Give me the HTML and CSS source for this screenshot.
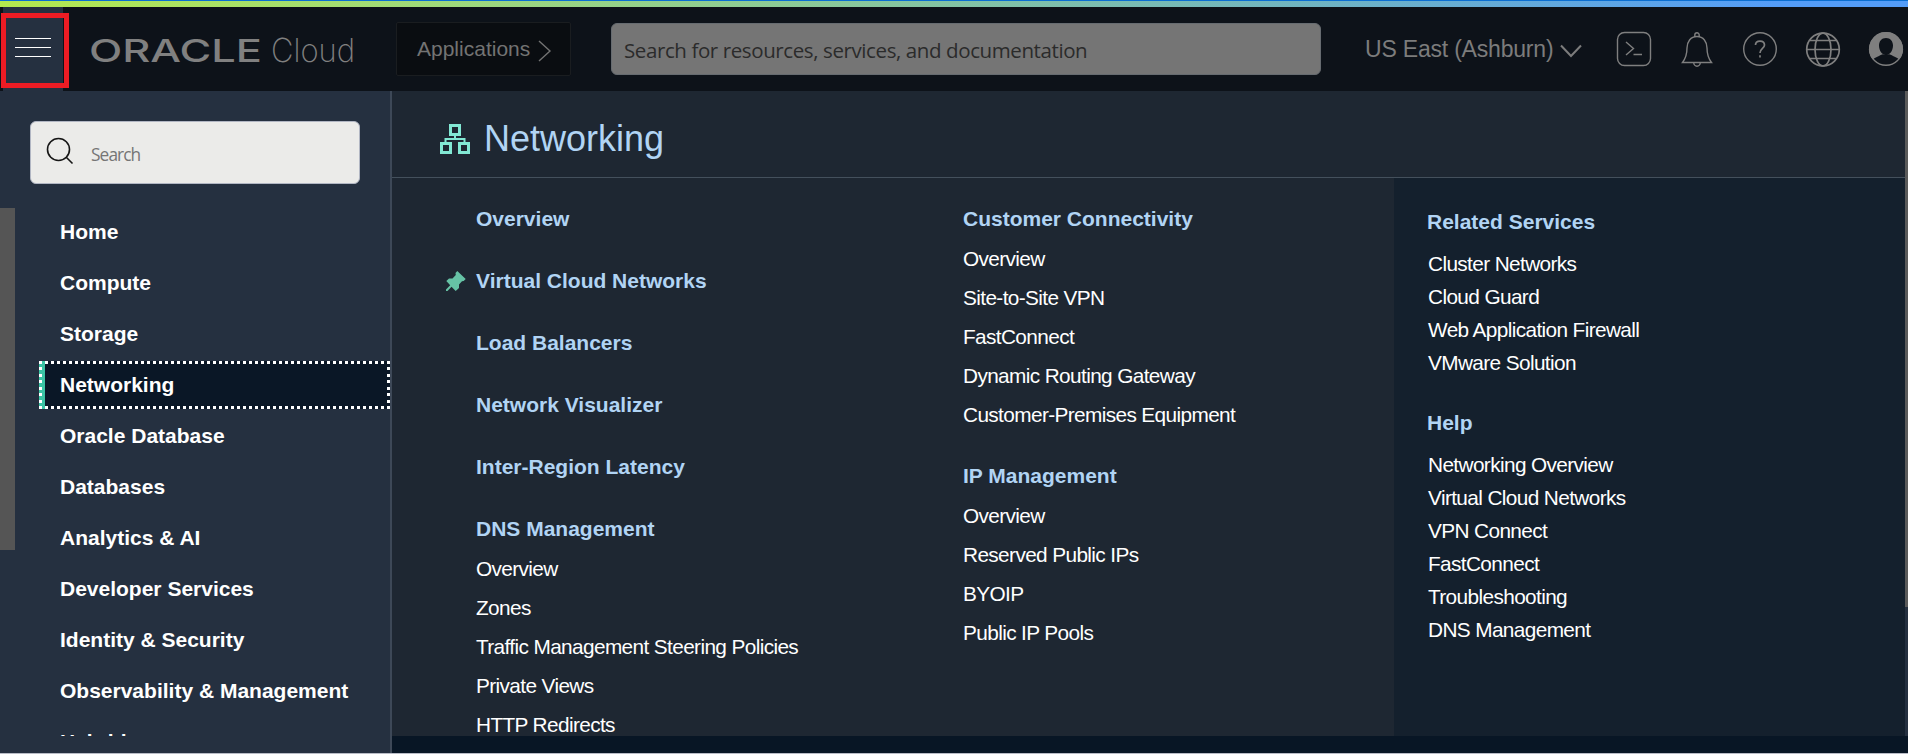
FILE: index.html
```html
<!DOCTYPE html>
<html lang="en">
<head>
<meta charset="utf-8">
<title>Oracle Cloud - Networking</title>
<link rel="stylesheet" href="styles.css">
</head>
<body>
<div class="accent"></div>
<header class="topbar">
  <button class="menu-button" aria-label="Menu"><span></span><span></span><span></span></button>
  <svg class="logo" width="270" height="44" viewBox="0 0 270 44">
    <text class="logo-oracle" x="-1" y="32.5" textLength="173" lengthAdjust="spacingAndGlyphs">ORACLE</text>
    <text class="logo-cloud" x="181" y="32.5" textLength="84" lengthAdjust="spacingAndGlyphs">Cloud</text>
  </svg>
  <button class="apps">Applications
    <svg width="14" height="22" viewBox="0 0 14 22"><path d="M1 1l11 10L1 21"/></svg>
  </button>
  <div class="global-search">Search for resources, services, and documentation</div>
  <div class="region"><span>US East (Ashburn)</span>
    <svg width="22" height="14" viewBox="0 0 22 14"><path d="M1 1.500l10 10.500l10-10.500"/></svg>
  </div>
  <div class="icons">
    <svg width="36" height="36" viewBox="0 0 36 36"><rect x="1.500" y="1.500" width="33" height="33" rx="7"/><path d="M10 11l7.500 6.500L10 24M17.500 23.500H26"/></svg>
    <svg width="36" height="36" viewBox="0 0 36 36"><path d="M3.500 31.500h29c-3.500-4.500-4.500-8-4.500-14.500 0-6-3.500-11.500-10-11.500S8 11 8 17c0 6.500-1 10-4.500 14.500zM15.800 5.500V4a2.200 2.200 0 0 1 4.400 0v1.500M14.700 31.500a3.300 3.700 0 0 0 6.600 0"/></svg>
    <svg width="36" height="36" viewBox="0 0 36 36"><circle cx="18" cy="18" r="16.300"/><path class="thick" d="M13.500 14c0-5.200 9-5.200 9 0 0 3.500-4.500 3.500-4.500 8M18 24.200v2.200"/></svg>
    <svg width="36" height="36" viewBox="0 0 36 36"><circle class="thick" cx="18" cy="18.500" r="16.300"/><ellipse class="thick" cx="18" cy="18.500" rx="8" ry="16.300"/><path class="thick" d="M2 18.500H34M5 9.500H31M5 27.500H31"/></svg>
    <svg width="36" height="36" viewBox="0 0 36 36"><circle cx="18" cy="18" r="16.300"/><path class="solid" fill-rule="evenodd" d="M18 1a17 17 0 0 0-13.300 27.500c2-2 5-2.500 8-4.500l2.800-1c1.500 1.200 3.500 1.200 5 0l2.800 1c3 2 6 2.500 8 4.500A17 17 0 0 0 18 1zM18 7c-4.500 0-7 3.500-7 7.500 0 5 3 9.500 7 9.500s7-4.500 7-9.500C25 10.500 22.500 7 18 7z"/></svg>
  </div>
  <div class="highlight"></div>
</header>
<main class="workspace">
  <aside class="sidebar">
    <div class="side-search">
      <svg width="28" height="28" viewBox="0 0 28 28"><circle cx="12.500" cy="12.500" r="11"/><path d="M20 20l6.500 6.500"/></svg>
      <span>Search</span>
    </div>
    <nav class="nav">
      <div class="nav-scroll"></div>
      <ul class="nav-list">
        <li>Home</li>
        <li>Compute</li>
        <li>Storage</li>
        <li class="active">Networking</li>
        <li>Oracle Database</li>
        <li>Databases</li>
        <li>Analytics &amp; AI</li>
        <li>Developer Services</li>
        <li>Identity &amp; Security</li>
        <li>Observability &amp; Management</li>
        <li>Hybrid</li>
      </ul>
    </nav>
  </aside>
  <section class="panel">
    <div class="panel-main">
      <div class="panel-head">
        <svg width="30" height="30" viewBox="0 0 30 30"><rect x="10.500" y="1.500" width="9" height="9"/><rect x="1.500" y="19.500" width="9" height="9"/><rect x="19.500" y="19.500" width="9" height="9"/><path d="M15 12v3M5.500 18v-3h19v3"/></svg>
        <h1>Networking</h1>
      </div>
      <div class="columns">
        <div class="col first">
          <div class="group"><h2>Overview</h2></div>
          <div class="group"><h2><svg class="pin" width="20" height="20" viewBox="0 0 20 20"><path d="M11.300 0L19.700 8l-2 2-1.700.2-3 3.300v3.500L9.700 20l-4.200-4.200L1.500 20H0v-1.500l4.200-4.200L.3 10 3 7.500h3.500L9.800 4 9.500 2z"/></svg>Virtual Cloud Networks</h2></div>
          <div class="group"><h2>Load Balancers</h2></div>
          <div class="group"><h2>Network Visualizer</h2></div>
          <div class="group"><h2>Inter-Region Latency</h2></div>
          <div class="group"><h2>DNS Management</h2>
            <a>Overview</a><a>Zones</a><a>Traffic Management Steering Policies</a><a>Private Views</a><a>HTTP Redirects</a>
          </div>
        </div>
        <div class="col">
          <div class="group"><h2>Customer Connectivity</h2>
            <a>Overview</a><a>Site-to-Site VPN</a><a>FastConnect</a><a>Dynamic Routing Gateway</a><a>Customer-Premises Equipment</a>
          </div>
          <div class="group"><h2>IP Management</h2>
            <a>Overview</a><a>Reserved Public IPs</a><a>BYOIP</a><a>Public IP Pools</a>
          </div>
        </div>
        <div class="related">
          <h2>Related Services</h2>
          <div class="links"><a>Cluster Networks</a><a>Cloud Guard</a><a>Web Application Firewall</a><a>VMware Solution</a></div>
          <h2>Help</h2>
          <div class="links"><a>Networking Overview</a><a>Virtual Cloud Networks</a><a>VPN Connect</a><a>FastConnect</a><a>Troubleshooting</a><a>DNS Management</a></div>
        </div>
      </div>
    </div>
    <div class="panel-scroll"><div class="thumb"></div></div>
  </section>
</main>
</body>
</html>
```
FILE: styles.css
```css
* { box-sizing: border-box; }
html, body { margin: 0; height: 100%; }
body {
  display: flex;
  flex-direction: column;
  width: 1908px;
  height: 754px;
  overflow: hidden;
  background: #253040;
  border-bottom: 1px solid #b9bcc6;
  font-family: "Liberation Sans", Arial, sans-serif;
  font-size: 20.8px;
  color: #fff;
}
h1, h2, ul { margin: 0; padding: 0; }
button { font: inherit; border: 0; padding: 0; }
svg { display: block; flex: none; fill: none; }

.accent {
  flex: none;
  height: 7px;
  border-top: 1px solid #0a6ed1;
  background: linear-gradient(90deg, #b4e94e 0%, #a0da78 22%, #70b5c0 68%, #549df8 93%, #549df8 100%);
}

.topbar {
  position: relative;
  flex: none;
  display: flex;
  align-items: center;
  height: 84px;
  padding-left: 3px;
  background: #0d1219;
}
.menu-button {
  display: flex;
  flex-direction: column;
  align-items: center;
  gap: 8px;
  width: 60px;
  height: 84px;
  padding-top: 31px;
  background: #253040;
}
.menu-button span { width: 36px; height: 1px; background: #fff; }
.highlight {
  position: absolute;
  left: 1px;
  top: 6px;
  width: 68px;
  height: 75px;
  border: 5px solid #ed1c24;
}
.logo { margin: 3px 0 0 27px; fill: #808080; overflow: visible; }
.logo-oracle { font: 500 31px Inter, sans-serif; }
.logo-cloud { font: 200 33px Inter, sans-serif; }
.apps {
  display: flex;
  align-items: center;
  gap: 8px;
  width: 175px;
  height: 54px;
  margin-left: 36px;
  padding-left: 20px;
  border: 1px solid #1a1d20;
  border-radius: 2px;
  background: #0a0d11;
  color: #737373;
  font-size: 21px;
}
.apps svg { margin-top: 4px; stroke: #737373; stroke-width: 1.4; }
.global-search {
  width: 710px;
  height: 52px;
  margin-left: 40px;
  padding-left: 12px;
  border: 1px solid #666b70;
  border-radius: 6px;
  background: #757575;
  color: #2b2b2b;
  font: 20.5px/52px "Open Sans", sans-serif;
  letter-spacing: -0.4px;
}
.region {
  display: flex;
  align-items: center;
  gap: 7px;
  width: 252px;
  padding-left: 44px;
  color: #7c7c7c;
  font-size: 23px;
  letter-spacing: -0.2px;
  white-space: nowrap;
}
.region svg { margin-top: 3px; stroke: #7c7c7c; stroke-width: 2; }
.icons { display: flex; gap: 27px; margin-left: 43px; }
.icons svg { stroke: #7f7f7f; stroke-width: 1.4; }
.icons .thick { stroke-width: 1.7; }
.icons .solid { fill: #7f7f7f; stroke: none; }

.workspace { flex: 1; display: flex; min-height: 0; }
.sidebar {
  flex: none;
  display: flex;
  flex-direction: column;
  width: 392px;
  padding: 30px 0 17px;
  border-right: 2px solid #3d4857;
}
.side-search {
  flex: none;
  display: flex;
  align-items: center;
  gap: 17px;
  width: 330px;
  height: 63px;
  margin: 0 0 24px 30px;
  padding-left: 15px;
  border: 1px solid #b1b6c3;
  border-radius: 6px;
  background: #ebebe9;
  color: #757575;
  font: 17.3px "Open Sans", sans-serif;
  letter-spacing: -0.9px;
}
.side-search svg { margin-top: -3px; stroke: #161616; stroke-width: 1.6; }
.side-search span { margin-top: 3px; }
.nav { flex: 1; display: flex; min-height: 0; overflow: hidden; }
.nav-scroll { flex: none; width: 15px; height: 342px; margin-right: 24px; background: #555; }
.nav-list { flex: 1; list-style: none; font-size: 21px; font-weight: 700; }
.nav-list li {
  height: 48px;
  margin-bottom: 3px;
  padding-left: 21px;
  line-height: 48px;
  white-space: nowrap;
}
.nav-list .active {
  background:
    repeating-linear-gradient(90deg, #fff 0 3px, transparent 3px 6px) top / 100% 3px no-repeat,
    repeating-linear-gradient(90deg, #fff 0 3px, transparent 3px 6px) bottom / 100% 3px no-repeat,
    repeating-linear-gradient(180deg, #fff 0 3px, transparent 3px 6.430px) left / 3px 100% no-repeat,
    repeating-linear-gradient(180deg, #fff 0 3px, transparent 3px 6.430px) right / 3px 100% no-repeat,
    linear-gradient(#3bc4a4, #3bc4a4) left / 6px 100% no-repeat,
    #0a1726;
}

.panel { flex: 1; display: flex; min-width: 0; padding-bottom: 17px; background: #081625; }
.panel-main { flex: 1; display: flex; flex-direction: column; background: #1e2732; }
.panel-scroll { flex: none; width: 3px; background: #253040; }
.thumb { height: 516px; background: #5a5a5a; }
.panel-head {
  flex: none;
  display: flex;
  align-items: center;
  gap: 14px;
  height: 87px;
  padding: 9px 0 0 48px;
  border-bottom: 1px solid #44505c;
}
.panel-head svg { margin-top: 1px; stroke: #82e8d4; stroke-width: 3; }
.panel-head path { stroke-width: 2; }
.panel-head h1 { color: #b1d4f4; font-size: 36px; font-weight: 400; }
.columns { flex: 1; display: flex; min-height: 0; overflow: hidden; }
.columns a { display: block; letter-spacing: -0.62px; white-space: nowrap; }
.columns h2 { color: #b1d4f4; font-size: 21px; white-space: nowrap; }
.col { flex: none; width: 431px; padding-top: 21px; }
.col.first { width: 487px; margin-left: 84px; }
.group { margin-bottom: 22px; }
.group h2 { position: relative; line-height: 40px; }
.group a { line-height: 39px; }
.pin { position: absolute; left: -30px; top: 10px; fill: #66c2a5; }
.related { flex: 1; padding: 27px 0 0 33px; background: #14202d; }
.related h2 { line-height: 33px; }
.links { margin: 9px 0 27px 1px; }
.links a { line-height: 33px; }
```
